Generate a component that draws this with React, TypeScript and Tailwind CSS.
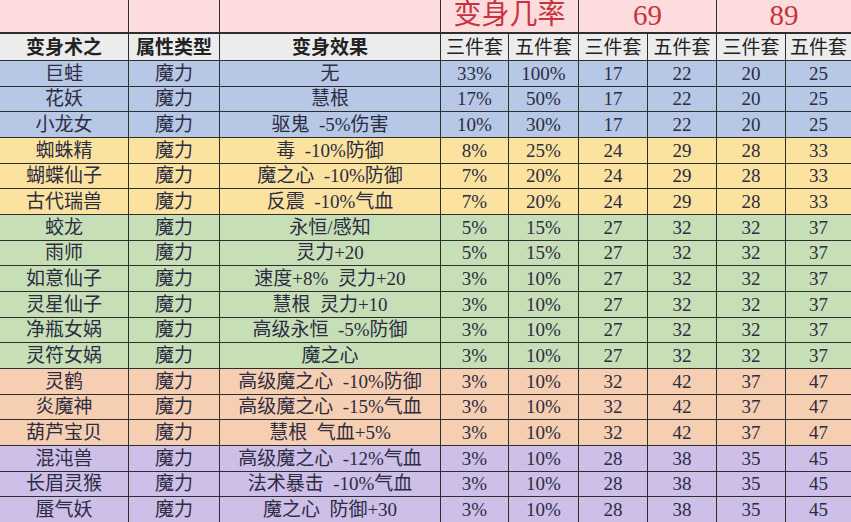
const FONT = { fontFamily: '"Liberation Serif", "Noto Sans CJK SC", serif' };

type Row = {
  name: string;
  effect: string;
  rate3: string;
  rate5: string;
  l69: [number, number];
  l89: [number, number];
};

const groups: { bg: string; rows: Row[] }[] = [
  {
    bg: "bg-[#b7c7e6]",
    rows: [
      { name: "巨蛙", effect: "无", rate3: "33%", rate5: "100%", l69: [17, 22], l89: [20, 25] },
      { name: "花妖", effect: "慧根", rate3: "17%", rate5: "50%", l69: [17, 22], l89: [20, 25] },
      { name: "小龙女", effect: "驱鬼  -5%伤害", rate3: "10%", rate5: "30%", l69: [17, 22], l89: [20, 25] },
    ],
  },
  {
    bg: "bg-[#fbe29e]",
    rows: [
      { name: "蜘蛛精", effect: "毒  -10%防御", rate3: "8%", rate5: "25%", l69: [24, 29], l89: [28, 33] },
      { name: "蝴蝶仙子", effect: "魔之心  -10%防御", rate3: "7%", rate5: "20%", l69: [24, 29], l89: [28, 33] },
      { name: "古代瑞兽", effect: "反震  -10%气血", rate3: "7%", rate5: "20%", l69: [24, 29], l89: [28, 33] },
    ],
  },
  {
    bg: "bg-[#c6dfb7]",
    rows: [
      { name: "蛟龙", effect: "永恒/感知", rate3: "5%", rate5: "15%", l69: [27, 32], l89: [32, 37] },
      { name: "雨师", effect: "灵力+20", rate3: "5%", rate5: "15%", l69: [27, 32], l89: [32, 37] },
      { name: "如意仙子", effect: "速度+8%  灵力+20", rate3: "3%", rate5: "10%", l69: [27, 32], l89: [32, 37] },
      { name: "灵星仙子", effect: "慧根  灵力+10", rate3: "3%", rate5: "10%", l69: [27, 32], l89: [32, 37] },
      { name: "净瓶女娲", effect: "高级永恒  -5%防御", rate3: "3%", rate5: "10%", l69: [27, 32], l89: [32, 37] },
      { name: "灵符女娲", effect: "魔之心", rate3: "3%", rate5: "10%", l69: [27, 32], l89: [32, 37] },
    ],
  },
  {
    bg: "bg-[#f6ceb1]",
    rows: [
      { name: "灵鹤", effect: "高级魔之心  -10%防御", rate3: "3%", rate5: "10%", l69: [32, 42], l89: [37, 47] },
      { name: "炎魔神", effect: "高级魔之心  -15%气血", rate3: "3%", rate5: "10%", l69: [32, 42], l89: [37, 47] },
      { name: "葫芦宝贝", effect: "慧根  气血+5%", rate3: "3%", rate5: "10%", l69: [32, 42], l89: [37, 47] },
    ],
  },
  {
    bg: "bg-[#cdbfe8]",
    rows: [
      { name: "混沌兽", effect: "高级魔之心  -12%气血", rate3: "3%", rate5: "10%", l69: [28, 38], l89: [35, 45] },
      { name: "长眉灵猴", effect: "法术暴击  -10%气血", rate3: "3%", rate5: "10%", l69: [28, 38], l89: [35, 45] },
      { name: "蜃气妖", effect: "魔之心  防御+30", rate3: "3%", rate5: "10%", l69: [28, 38], l89: [35, 45] },
    ],
  },
];

function Cell({ bg, children, className = "" }: { bg: string; children?: React.ReactNode; className?: string }) {
  return (
    <div className={`${bg} flex items-center justify-center whitespace-pre text-[19px] leading-none text-[#2c2c42] ${className}`}>
      {children}
    </div>
  );
}

export default function App() {
  const sets = ["三件套", "五件套", "三件套", "五件套", "三件套", "五件套"];

  return (
    <div className="w-[851px] h-[522px] bg-white overflow-hidden" style={FONT}>
      <div className="grid h-full grid-cols-[128px_90px_220px_67px_69px_68px_68px_68px_1fr] grid-rows-[33px_26px_repeat(18,minmax(0,1fr))] gap-px bg-[#2e2e2e]">
        {/* top header */}
        <div className="bg-[#fcdcdd] border-b border-[#2e2e2e]" />
        <div className="bg-[#fcdcdd] border-b border-[#2e2e2e]" />
        <div className="bg-[#fcdcdd] border-b border-[#2e2e2e]" />
        <div className="col-span-2 bg-[#fcdcdd] border-b border-[#2e2e2e] flex items-center justify-center pb-0.5 text-[28px] leading-none text-[#c9323d]">
          变身几率
        </div>
        <div className="col-span-2 bg-[#fcdcdd] border-b border-[#2e2e2e] flex items-center justify-center pb-0.5 text-[29px] leading-none text-[#c9323d]">
          69
        </div>
        <div className="col-span-2 bg-[#fcdcdd] border-b border-[#2e2e2e] flex items-center justify-center pb-0.5 text-[29px] leading-none text-[#c9323d]">
          89
        </div>

        {/* column header */}
        <Cell bg="bg-[#ececec]" className="font-bold text-[17px] text-[#222]">变身术之</Cell>
        <Cell bg="bg-[#ececec]" className="font-bold text-[17px] text-[#222]">属性类型</Cell>
        <Cell bg="bg-[#ececec]" className="font-bold text-[17px] text-[#222]">变身效果</Cell>
        {sets.map((s, i) => (
          <Cell key={i} bg="bg-[#ececec]" className="text-[18px] text-[#222]">
            {s}
          </Cell>
        ))}

        {/* data rows */}
        {groups.map((g) =>
          g.rows.map((r) => (
            <div key={r.name} className="contents">
              <Cell bg={g.bg}>{r.name}</Cell>
              <Cell bg={g.bg}>魔力</Cell>
              <Cell bg={g.bg}>{r.effect}</Cell>
              <Cell bg={g.bg}>{r.rate3}</Cell>
              <Cell bg={g.bg}>{r.rate5}</Cell>
              <Cell bg={g.bg}>{r.l69[0]}</Cell>
              <Cell bg={g.bg}>{r.l69[1]}</Cell>
              <Cell bg={g.bg}>{r.l89[0]}</Cell>
              <Cell bg={g.bg}>{r.l89[1]}</Cell>
            </div>
          ))
        )}
      </div>
    </div>
  );
}
